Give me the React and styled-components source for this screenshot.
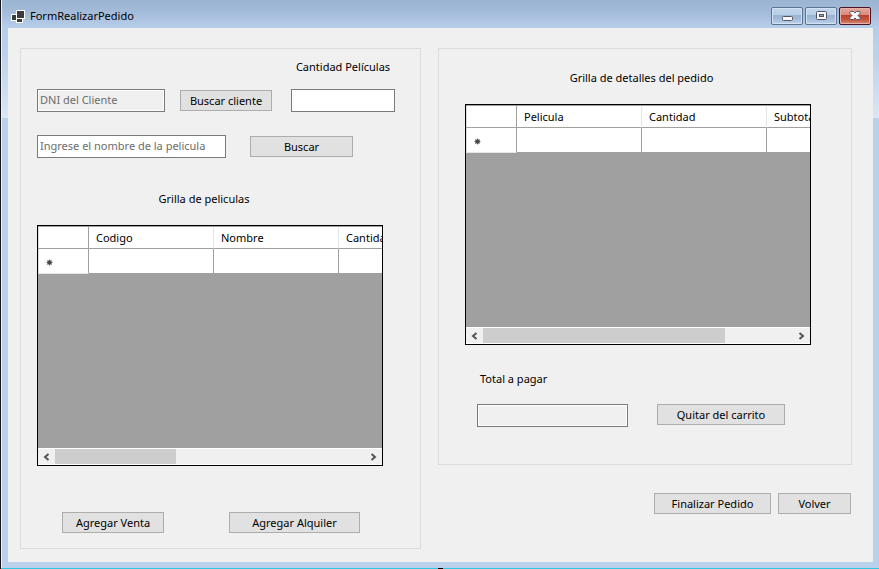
import React from "react";
import styled, { createGlobalStyle } from "styled-components";

const GlobalStyle = createGlobalStyle`
  *, *::before, *::after { box-sizing: border-box; }
  body {
    margin: 0;
    background: #b9d1ea;
    color: #000;
    font-family: "Noto Sans", "Open Sans", sans-serif;
    font-size: 11px;
    line-height: 16px;
  }
  button, input { font: inherit; color: inherit; margin: 0; }
`;

const Desktop = styled.div`
  display: flex;
  flex-direction: column;
  min-height: 100vh;
  background: #15151b;
  padding-left: 1px;
`;

const Window = styled.main`
  flex: 1;
  display: flex;
  flex-direction: column;
  padding: 0 6px 6px;
  border-left: 1px solid #eef4fb;
  background:
    linear-gradient(#9ab4d2, #b5cdea 28px, #bdd3ec 60px, #dbe7f5 118px, transparent 118px),
    #b9d1ea;
`;

const TitleBar = styled.header`
  display: flex;
  align-items: center;
  height: 28px;
  margin: 0 -6px;
  padding: 4px 8px 0 9px;
  background: linear-gradient(#9ab4d2, #a3bbd9 12px, #b7cfeb);
`;

const Title = styled.h1`
  flex: 1;
  margin: 0 0 0 5px;
  font-size: 11px;
  font-weight: 400;
`;

const WindowButtons = styled.div`
  display: flex;
  gap: 2px;
`;

const WindowButton = styled.button`
  display: flex;
  align-items: center;
  justify-content: center;
  width: 32px;
  height: 18px;
  padding: 0;
  border: 1px solid ${(p) => (p.$close ? "#4b1420" : "#5d7391")};
  border-radius: 2px;
  background: ${(p) =>
    p.$close
      ? "linear-gradient(#e6a79c, #d98a7c 44%, #b8402a 45%, #c4573f 75%, #d98c77)"
      : "linear-gradient(#c3d7ee, #b7cde6 44%, #98b2cf 45%, #a5bedb 75%, #bdd5ee)"};
  box-shadow: inset 0 0 0 1px ${(p) => (p.$close ? "#e5b3a8" : "#d3e3f4")};
`;

const Form = styled.form`
  flex: 1;
  display: grid;
  grid-template-columns: minmax(0, 401fr) minmax(0, 414fr);
  align-items: start;
  gap: 17px;
  padding: 20px 21px 13px 12px;
  background: #f0f0f0;
`;

const Panel = styled.section`
  display: flex;
  flex-direction: column;
  padding: ${(p) => p.$padding};
  border: 1px solid #dcdcdc;
`;

const Row = styled.div`
  display: flex;
  align-items: ${(p) => p.$align || "flex-end"};
  gap: ${(p) => p.$gap}px;
  margin-top: ${(p) => p.$top || 0}px;
  padding-left: ${(p) => p.$indent || 0}px;
`;

const Field = styled.div`
  display: flex;
  flex-direction: column;
  flex-shrink: 0;
  gap: 14px;
  width: 104px;
  margin-left: 4px;
`;

const Label = styled.label`
  text-align: center;
  white-space: nowrap;
`;

const TotalLabel = styled.label`
  margin: 26px 0 17px;
  padding-left: 15px;
`;

const GridTitle = styled.h2`
  margin: ${(p) => p.$top || 0}px 0 18px;
  padding: ${(p) => p.$padding};
  font-size: 11px;
  font-weight: 400;
  text-align: center;
`;

const TextBox = styled.input`
  flex-shrink: 0;
  width: ${(p) => p.$width}px;
  height: 23px;
  padding: 0 2px 2px;
  border: 1px solid #7a7a7a;
  border-radius: 0;
  outline: none;
  background: #fff;
  &::placeholder { color: #6d6d6d; opacity: 1; }
  &:disabled {
    background: #f0f0f0;
    box-shadow: inset 0 0 0 1px #fff;
  }
`;

const Button = styled.button`
  flex-shrink: 0;
  width: ${(p) => p.$width}px;
  height: 21px;
  margin: ${(p) => (p.$centred ? "1px 0" : "0")};
  padding: 0;
  border: 1px solid #adadad;
  border-radius: 0;
  background: #e1e1e1;
  line-height: 19px;
  white-space: nowrap;
`;

const RightColumn = styled.div`
  display: flex;
  flex-direction: column;
  gap: 28px;
`;

const Actions = styled.div`
  display: flex;
  justify-content: flex-end;
  gap: 7px;
  padding-right: 1px;
`;

const GridFrame = styled.div`
  display: flex;
  flex-direction: column;
  height: 241px;
  border: 1px solid #000;
  background: #a0a0a0;
`;

const GridViewport = styled.div`
  flex: 1;
  overflow: hidden;
  border-top: 1px solid #a0a0a0;
`;

const Table = styled.table`
  width: 426px;
  table-layout: fixed;
  border-collapse: separate;
  border-spacing: 0;
`;

const Corner = styled.td`
  width: 51px;
  height: 22px;
  padding: 0;
  border: solid #a0a0a0;
  border-width: 0 1px 1px 0;
  background: #fff;
  box-shadow: inset 1px 0 #dcdcdc;
`;

const ColumnHeader = styled.th`
  width: 125px;
  height: 22px;
  padding: 0 7px;
  border-right: 1px solid #e5e5e5;
  border-bottom: 1px solid #a0a0a0;
  background: #fff;
  font-weight: 400;
  text-align: left;
`;

const RowHeader = styled.th`
  height: 25px;
  padding: 2px 0 0 8px;
  border-right: 1px solid #a0a0a0;
  border-bottom: 1px solid #e5e5e5;
  background: #fff;
  box-shadow: inset 1px 0 #dcdcdc;
  text-align: left;
  svg { display: block; }
`;

const Cell = styled.td`
  height: 25px;
  padding: 0;
  border-right: 1px solid #a0a0a0;
  border-bottom: 1px solid #a0a0a0;
  background: #fff;
`;

const ScrollBar = styled.div`
  display: flex;
  height: 17px;
  border: solid #fff;
  border-width: 1px 0;
  background: #f0f0f0;
`;

const ScrollArrow = styled.button`
  display: flex;
  align-items: center;
  justify-content: center;
  width: 17px;
  padding: 0;
  border: 0;
  background: #f0f0f0;
`;

const Track = styled.div`
  flex: 1;
`;

const Thumb = styled.div`
  width: ${(p) => p.$size}%;
  height: 100%;
  background: #cdcdcd;
`;

function AppIcon() {
  return (
    <svg width="14" height="13" viewBox="0 0 14 13" shapeRendering="crispEdges" aria-hidden="true">
      <path fill="#fff" d="M5 0h9v9h-2v4H5v-2H0V4h5z" />
      <path fill="#3c3c3c" d="M6 1h7v7H6zM1 5h4v5H1zM6 9h5v3H6z" />
    </svg>
  );
}

function MinimizeIcon() {
  return (
    <svg width="12" height="12" viewBox="0 0 12 12" aria-hidden="true">
      <rect x="1.5" y="6.5" width="10" height="4" rx="1" fill="#f7f7f7" stroke="#535666" />
    </svg>
  );
}

function MaximizeIcon() {
  return (
    <svg width="12" height="10" viewBox="0 0 12 10" aria-hidden="true">
      <rect x="1.5" y=".5" width="10" height="8" rx="1" fill="#f7f7f7" stroke="#535666" />
      <rect x="4.5" y="3.5" width="4" height="2" fill="#8aa8cc" stroke="#535666" />
    </svg>
  );
}

function CloseIcon() {
  return (
    <svg width="12" height="10" viewBox="0 0 12 10" aria-hidden="true">
      <path
        d="M1.5.5h3L6 2 7.500.5h3l1 1.500L9 4.500 11.500 7l-1 1.500h-3L6 7 4.500 8.500h-3L.5 7 3 4.500.5 2z"
        fill="#f7f7f7"
        stroke="#535666"
        strokeLinejoin="round"
      />
    </svg>
  );
}

function NewRowIcon() {
  return (
    <svg width="7" height="7" viewBox="0 0 7 7" aria-hidden="true">
      <path d="M3.500 .5v6M1 1.500l5 4M1 5.500l5-4M.5 3.500h6" stroke="#777" />
      <circle cx="3.500" cy="3.500" r="2.200" fill="#484848" />
    </svg>
  );
}

function Chevron({ right }) {
  return (
    <svg width="7" height="8" viewBox="0 0 7 8" aria-hidden="true">
      <path d={right ? "M1.500 1l3.500 3-3.500 3" : "M5.500 1L2 4l3.500 3"} fill="none" stroke="#555" strokeWidth="2" />
    </svg>
  );
}

function DataGrid({ label, columns, thumb }) {
  return (
    <GridFrame>
      <GridViewport>
        <Table aria-label={label}>
          <thead>
            <tr>
              <Corner />
              {columns.map((name) => (
                <ColumnHeader key={name} scope="col">{name}</ColumnHeader>
              ))}
            </tr>
          </thead>
          <tbody>
            <tr>
              <RowHeader scope="row" aria-label="Fila nueva"><NewRowIcon /></RowHeader>
              {columns.map((name) => <Cell key={name} />)}
            </tr>
          </tbody>
        </Table>
      </GridViewport>
      <ScrollBar>
        <ScrollArrow type="button" aria-label="Desplazar a la izquierda"><Chevron /></ScrollArrow>
        <Track><Thumb $size={thumb} /></Track>
        <ScrollArrow type="button" aria-label="Desplazar a la derecha"><Chevron right /></ScrollArrow>
      </ScrollBar>
    </GridFrame>
  );
}

const ScreenEdge = styled.div`
  display: flex;
  justify-content: center;
  height: 1px;
  background: #2fc8e0;
  &::after {
    content: "";
    width: 5px;
    background: #000;
  }
`;

export default function App() {
  return (
    <>
      <GlobalStyle />
      <Desktop>
        <Window>
          <TitleBar>
            <AppIcon />
            <Title>FormRealizarPedido</Title>
            <WindowButtons>
              <WindowButton type="button" aria-label="Minimizar"><MinimizeIcon /></WindowButton>
              <WindowButton type="button" aria-label="Maximizar"><MaximizeIcon /></WindowButton>
              <WindowButton type="button" aria-label="Cerrar" $close><CloseIcon /></WindowButton>
            </WindowButtons>
          </TitleBar>
          <Form onSubmit={(e) => e.preventDefault()}>
            <Panel $padding="10px 37px 15px 16px">
              <Row $gap={15}>
                <TextBox $width={128} placeholder="DNI del Cliente" aria-label="DNI del Cliente" disabled />
                <Button type="button" $width={92} $centred>Buscar cliente</Button>
                <Field>
                  <Label htmlFor="cantidad">Cantidad Películas</Label>
                  <TextBox id="cantidad" $width={104} />
                </Field>
              </Row>
              <Row $gap={24} $top={23}>
                <TextBox
                  $width={189}
                  placeholder="Ingrese el nombre de la pelicula"
                  aria-label="Nombre de la pelicula"
                />
                <Button type="button" $width={103} $centred>Buscar</Button>
              </Row>
              <GridTitle $top={33} $padding="0 12px 0 0">Grilla de peliculas</GridTitle>
              <DataGrid label="Grilla de peliculas" columns={["Codigo", "Nombre", "Cantidad"]} thumb={39} />
              <Row $gap={65} $top={46} $indent={25}>
                <Button type="button" $width={102}>Agregar Venta</Button>
                <Button type="button" $width={131}>Agregar Alquiler</Button>
              </Row>
            </Panel>
            <RightColumn>
              <Panel $padding="21px 40px 37px 26px">
                <GridTitle $padding="0 0 0 7px">Grilla de detalles del pedido</GridTitle>
                <DataGrid
                  label="Grilla de detalles del pedido"
                  columns={["Pelicula", "Cantidad", "Subtotal"]}
                  thumb={78}
                />
                <TotalLabel htmlFor="total">Total a pagar</TotalLabel>
                <Row $gap={29} $indent={12} $align="flex-start">
                  <TextBox id="total" $width={151} disabled />
                  <Button type="button" $width={128}>Quitar del carrito</Button>
                </Row>
              </Panel>
              <Actions>
                <Button type="submit" $width={117}>Finalizar Pedido</Button>
                <Button type="button" $width={73}>Volver</Button>
              </Actions>
            </RightColumn>
          </Form>
        </Window>
        <ScreenEdge />
      </Desktop>
    </>
  );
}
